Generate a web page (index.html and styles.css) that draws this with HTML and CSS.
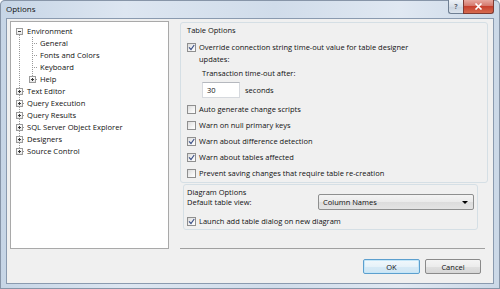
FILE: index.html
```html
<!DOCTYPE html>
<html>
<head>
<meta charset="utf-8">
<title>Options</title>
<link rel="stylesheet" href="styles.css">
</head>
<body>
<div class="window">
  <div class="titlebar">
    <span class="title">Options</span>
    <div class="caption">
      <span class="cap help">?</span>
      <span class="cap close">
        <svg width="9" height="7" viewBox="0 0 9 7"><path d="M1.5 0.5l6 6M7.5 0.5l-6 6" stroke="#fff" stroke-width="1.6"/></svg>
      </span>
    </div>
  </div>

  <div class="client">
    <div class="main">
      <div class="tree">
        <ul class="nodes">
          <li class="first">
            <div class="row"><span class="exp minus"></span><span>Environment</span></div>
            <ul>
              <li class="lvl1"><div class="row"><span class="exp none"></span><span>General</span></div></li>
              <li class="lvl1"><div class="row"><span class="exp none"></span><span>Fonts and Colors</span></div></li>
              <li class="lvl1"><div class="row"><span class="exp none"></span><span>Keyboard</span></div></li>
              <li class="lvl1 last"><div class="row"><span class="exp plus"></span><span>Help</span></div></li>
            </ul>
          </li>
          <li><div class="row"><span class="exp plus"></span><span>Text Editor</span></div></li>
          <li><div class="row"><span class="exp plus"></span><span>Query Execution</span></div></li>
          <li><div class="row"><span class="exp plus"></span><span>Query Results</span></div></li>
          <li><div class="row"><span class="exp plus"></span><span>SQL Server Object Explorer</span></div></li>
          <li><div class="row"><span class="exp plus"></span><span>Designers</span></div></li>
          <li class="last"><div class="row"><span class="exp plus"></span><span>Source Control</span></div></li>
        </ul>
      </div>

      <div class="pane">
        <div class="group table-opts">
          <div class="group-title">Table Options</div>
          <div class="check multi">
            <span class="cb"><svg viewBox="0 0 7 7"><path d="M1 3.4l2 2.1L6.2 1" /></svg></span>
            <span>Override connection string time-out value for table designer<br>updates:</span>
          </div>
          <div class="sub-label">Transaction time-out after:</div>
          <div class="timeout">
            <span class="textbox">30</span>
            <span>seconds</span>
          </div>
          <div class="checks">
            <div class="check"><span class="cb"></span><span>Auto generate change scripts</span></div>
            <div class="check"><span class="cb"></span><span>Warn on null primary keys</span></div>
            <div class="check"><span class="cb"><svg viewBox="0 0 7 7"><path d="M1 3.4l2 2.1L6.2 1" /></svg></span><span>Warn about difference detection</span></div>
            <div class="check"><span class="cb"><svg viewBox="0 0 7 7"><path d="M1 3.4l2 2.1L6.2 1" /></svg></span><span>Warn about tables affected</span></div>
            <div class="check"><span class="cb"></span><span>Prevent saving changes that require table re-creation</span></div>
          </div>
        </div>

        <div class="group diagram-opts">
          <div class="group-title">Diagram Options</div>
          <div class="view-row">
            <span>Default table view:</span>
            <span class="combo"><span>Column Names</span><span class="arrow"></span></span>
          </div>
          <div class="check launch">
            <span class="cb"><svg viewBox="0 0 7 7"><path d="M1 3.4l2 2.1L6.2 1" /></svg></span>
            <span>Launch add table dialog on new diagram</span>
          </div>
        </div>

        <div class="sep"></div>
      </div>
    </div>

    <div class="buttons">
      <span class="btn default">OK</span>
      <span class="btn">Cancel</span>
    </div>
  </div>
</div>
</body>
</html>
```

FILE: styles.css
```css
body {
  margin: 0;
  background: #fff;
  font-family: "Open Sans", "Noto Sans", sans-serif;
  font-size: 7.5px;
  color: #111;
}

.window {
  width: 500px;
  height: 289px;
  box-sizing: border-box;
  padding: 0 6px 5px 6px;
  display: flex;
  flex-direction: column;
  border-radius: 5px 5px 0 0;
  background: linear-gradient(to right, #c6d5e6 0%, #dde6f1 25%, #d0dcea 55%, #e0e8f2 80%, #cbd8e7 100%);
  box-shadow: inset 0 0 0 1px #8795a8;
}

/* title bar */

.titlebar {
  height: 18px;
  display: flex;
}

.title {
  line-height: 18px;
  font-size: 8px;
}

.caption {
  margin-left: auto;
  display: flex;
  height: 14px;
}

.cap {
  height: 14px;
  box-sizing: border-box;
  border: 1px solid #6f7f93;
  border-top: none;
  display: flex;
  align-items: center;
  justify-content: center;
}

.help {
  width: 15px;
  border-radius: 0 0 0 3px;
  border-right: none;
  background: linear-gradient(#eef2f7, #d6dee8 50%, #c9d3df 51%, #dbe3ec);
  color: #5a6470;
  font-size: 7px;
  font-weight: bold;
}

.close {
  width: 31px;
  border-radius: 0 0 3px 0;
  border-color: #7d3a33;
  background: linear-gradient(#e7a89f, #d4786c 45%, #c7402e 50%, #d66b4f 100%);
}

/* client area */

.client {
  flex: 1;
  background: #f0f0f0;
  border: 1px solid #8a9aaf;
  padding: 2px 5px 9px 3px;
  display: flex;
  flex-direction: column;
}

.main {
  display: flex;
  gap: 11px;
  height: 228px;
}

/* tree */

.tree {
  width: 159px;
  box-sizing: border-box;
  background: #fff;
  border: 1px solid #a9a9a9;
  padding-top: 3px;
}

.tree ul {
  list-style: none;
  margin: 0;
  padding: 0;
}

.nodes > li {
  background:
    repeating-linear-gradient(to bottom, #9a9a9a 0 1px, transparent 1px 2px) 8px 0 / 1px 100% no-repeat,
    repeating-linear-gradient(to right, #9a9a9a 0 1px, transparent 1px 2px) 8px 6px / 6px 1px no-repeat;
}

.nodes > li.first {
  background:
    repeating-linear-gradient(to bottom, #9a9a9a 0 1px, transparent 1px 2px) 8px 6px / 1px calc(100% - 6px) no-repeat;
}

.nodes > li.last {
  background:
    repeating-linear-gradient(to bottom, #9a9a9a 0 1px, transparent 1px 2px) 8px 0 / 1px 7px no-repeat,
    repeating-linear-gradient(to right, #9a9a9a 0 1px, transparent 1px 2px) 8px 6px / 6px 1px no-repeat;
}

.nodes li.lvl1 {
  background:
    repeating-linear-gradient(to bottom, #9a9a9a 0 1px, transparent 1px 2px) 21px 0 / 1px 100% no-repeat,
    repeating-linear-gradient(to right, #9a9a9a 0 1px, transparent 1px 2px) 21px 6px / 6px 1px no-repeat;
}

.nodes li.lvl1.last {
  background:
    repeating-linear-gradient(to bottom, #9a9a9a 0 1px, transparent 1px 2px) 21px 0 / 1px 7px no-repeat,
    repeating-linear-gradient(to right, #9a9a9a 0 1px, transparent 1px 2px) 21px 6px / 6px 1px no-repeat;
}

.row {
  height: 12px;
  display: flex;
  align-items: center;
  padding-left: 5px;
  white-space: nowrap;
  font-size: 7.6px;
}

.lvl1 .row {
  padding-left: 18px;
}

.exp {
  width: 7px;
  height: 7px;
  box-sizing: border-box;
  margin-right: 4px;
  align-self: flex-start;
  margin-top: 3px;
  flex: none;
}

.exp.plus, .exp.minus {
  border: 1px solid #9b9b9b;
}

.exp.minus {
  background: linear-gradient(#3a3a3a, #3a3a3a) center / 3px 1px no-repeat, linear-gradient(#fff, #e6e6e6);
}

.exp.plus {
  background:
    linear-gradient(#3a3a3a, #3a3a3a) center / 3px 1px no-repeat,
    linear-gradient(#3a3a3a, #3a3a3a) center / 1px 3px no-repeat,
    linear-gradient(#fff, #e6e6e6);
}

/* option pane */

.pane {
  width: 308px;
  display: flex;
  flex-direction: column;
}

.group {
  border: 1px solid #d5dfe5;
  border-radius: 3px;
}

.table-opts {
  margin-top: 1px;
  padding: 0 0 1px 6px;
}

.group-title {
  height: 12px;
  line-height: 12px;
  margin-top: 1px;
}

.check {
  display: flex;
  align-items: center;
  gap: 3px;
  white-space: nowrap;
}

.check.multi {
  align-items: flex-start;
  margin-top: 5px;
  line-height: 12px;
}

.check.multi .cb {
  margin-top: 2px;
}

.cb {
  width: 9px;
  height: 9px;
  box-sizing: border-box;
  border: 1px solid #8f8f8f;
  background: linear-gradient(135deg, #dcdcdc, #f7f7f7 70%, #fff);
  flex: none;
  display: flex;
}

.cb svg {
  width: 7px;
  height: 7px;
}

.cb path {
  fill: none;
  stroke: #3d5288;
  stroke-width: 1.2;
}

.sub-label {
  height: 12px;
  line-height: 12px;
  margin-top: 2px;
  padding-left: 15px;
}

.timeout {
  display: flex;
  align-items: center;
  height: 16px;
  margin-top: 3px;
  padding-left: 15px;
  gap: 5px;
}

.textbox {
  width: 38px;
  height: 16px;
  box-sizing: border-box;
  border: 1px solid #d6d9de;
  border-top-color: #b5b8be;
  background: #fff;
  padding-left: 4px;
  line-height: 14px;
}

.checks {
  margin-top: 3px;
}

.checks .check {
  height: 16px;
}

.diagram-opts {
  margin: 1px 10px 0 3px;
  padding: 0 0 2px 3px;
}

.view-row {
  display: flex;
  align-items: center;
  height: 16px;
  margin-top: -4px;
  padding-right: 3px;
}

.combo {
  margin-left: auto;
  width: 156px;
  height: 16px;
  box-sizing: border-box;
  border: 1px solid #8e8f8f;
  border-radius: 2px;
  background: linear-gradient(#f4f4f4, #eaeaea 50%, #dcdcdc 51%, #e4e4e4);
  display: flex;
  align-items: center;
  padding: 0 5px 0 4px;
}

.arrow {
  margin-left: auto;
  width: 0;
  height: 0;
  border-left: 3px solid transparent;
  border-right: 3px solid transparent;
  border-top: 3px solid #000;
}

.check.launch {
  height: 12px;
  margin-top: 5px;
}

.sep {
  margin-top: auto;
  margin-right: 3px;
  border-top: 1px solid #a0a0a0;
}

/* dialog buttons */

.buttons {
  display: flex;
  justify-content: flex-end;
  gap: 5px;
  margin-top: 10px;
  padding-right: 7px;
}

.btn {
  width: 56px;
  height: 15px;
  box-sizing: border-box;
  border: 1px solid #8a8a8a;
  border-radius: 2px;
  background: linear-gradient(#f4f4f4, #ececec 50%, #e0e0e0 51%, #d6d6d6);
  display: flex;
  align-items: center;
  justify-content: center;
}

.btn.default {
  width: 57px;
  border-color: #5c9fce;
  box-shadow: inset 0 0 0 1px #c4e6f8;
  background: linear-gradient(#f1f8fc, #e6f2f9 50%, #d6eaf6 51%, #cfe5f3);
}
```
